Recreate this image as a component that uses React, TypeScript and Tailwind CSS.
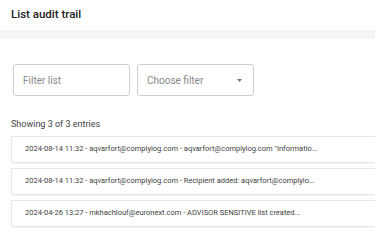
const entries = [
  '2024-08-14 11:32 - aqvarfort@complylog.com - aqvarfort@complylog.com "Informatio...',
  '2024-08-14 11:32 - aqvarfort@complylog.com - Recipient added: aqvarfort@complylo...',
  '2024-04-26 13:27 - mkhachlouf@euronext.com - ADVISOR SENSITIVE list created...',
];

export default function App() {
  return (
    <div className="h-[240px] w-[375px] overflow-hidden bg-white font-['Roboto',sans-serif] text-[#212121]">
      <header className="flex h-[30px] items-center px-[11px]">
        <h1 className="text-[11.5px] font-medium">List audit trail</h1>
      </header>
      <div className="h-[9px] bg-[#f5f5f5]" />

      <div className="flex gap-[7px] px-[13px] pt-[25px]">
        <input
          placeholder="Filter list"
          className="h-[32px] w-[117px] rounded-[3px] border border-[#cfcfcf] px-[9px] text-[10px] outline-none placeholder:text-[#8a8a8a]"
        />
        <button
          type="button"
          className="flex h-[32px] w-[117px] items-center justify-between rounded-[3px] border border-[#cfcfcf] pl-[9px] pr-[11px] text-[10px] text-[#8a8a8a]"
        >
          <span>Choose filter</span>
          <svg width="5" height="3" viewBox="0 0 5 3" aria-hidden>
            <path d="M0 0h5L2.5 3z" fill="#757575" />
          </svg>
        </button>
      </div>

      <p className="mt-[22px] px-[11px] text-[9px] text-[#424242]">Showing 3 of 3 entries</p>

      <ul className="ml-[11px] mt-[4px] flex w-[400px] flex-col gap-[5px]">
        {entries.map((entry) => (
          <li
            key={entry}
            className="flex h-[27px] items-center whitespace-nowrap rounded-[2px] border border-[#e6e6e6] px-[13px] text-[7.5px] text-[#424242] shadow-[0_1px_1px_rgba(0,0,0,0.04)]"
          >
            {entry}
          </li>
        ))}
      </ul>
    </div>
  );
}
